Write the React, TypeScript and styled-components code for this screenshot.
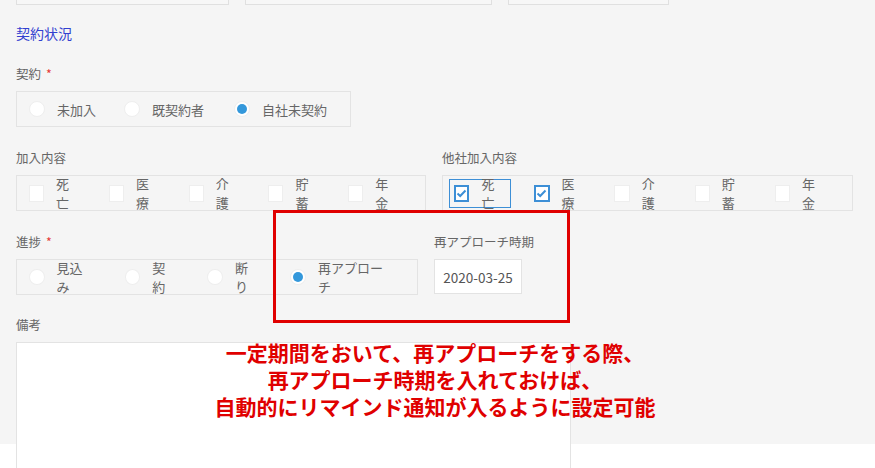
import React from "react";
import styled, { createGlobalStyle } from "styled-components";

const Global = createGlobalStyle`
  html, body { margin: 0; padding: 0; background: #fff; }
  body { font-family: "Noto Sans CJK JP", "Noto Sans", sans-serif; }
`;

const Page = styled.div`
  position: relative;
  width: 875px;
  height: 468px;
  overflow: hidden;
  background: #fff;
`;
const Gray = styled.div`
  height: 444px;
  background: #f5f5f5;
  padding: 0 16px;
  box-sizing: border-box;
  display: flex;
  flex-direction: column;
`;
const TopRow = styled.div`
  display: flex;
  gap: 16px;
  margin-top: -30px;
  height: 35px;
`;
const TopBox = styled.div<{ w: number }>`
  width: ${(p) => p.w}px;
  height: 35px;
  box-sizing: border-box;
  border: 1px solid #e0e0e0;
  background: #f7f7f7;
`;
const Section = styled.div`
  color: #3240d0;
  font-size: 14px;
  margin-top: 18px;
  line-height: 20px;
`;
const Row = styled.div`
  display: flex;
  gap: 16px;
`;
const Field = styled.div<{ mt: number }>`
  display: flex;
  flex-direction: column;
  margin-top: ${(p) => p.mt}px;
`;
const Label = styled.div`
  color: #666;
  font-size: 12.5px;
  line-height: 18px;
  height: 18px;
  margin-bottom: 8px;
`;
const Req = styled.span`
  color: #e53935;
  margin-left: 5px;
`;
const Group = styled.div<{ w: number }>`
  width: ${(p) => p.w}px;
  height: 36px;
  box-sizing: border-box;
  border: 1px solid #e3e3e3;
  display: flex;
  align-items: center;
  padding-left: 9px;
`;
const Item = styled.div<{ focus?: boolean; sp: number }>`
  display: flex;
  align-items: center;
  height: 27px;
  padding: 0 6px 0 ${(p) => (p.focus ? 4 : 2)}px;
  margin-right: ${(p) => p.sp}px;
  margin-left: ${(p) => (p.focus ? -3 : 0)}px;
  border: 1px solid ${(p) => (p.focus ? "#3d8fd6" : "transparent")};
  color: #666;
  font-size: 13px;
  gap: 12px;
`;
const Radio = styled.span<{ on?: boolean }>`
  width: 16px;
  height: 16px;
  border-radius: 50%;
  background: #fff;
  border: 1px solid #eee;
  box-sizing: border-box;
  display: flex;
  align-items: center;
  justify-content: center;
  &::after {
    content: "";
    width: 10px;
    height: 10px;
    border-radius: 50%;
    background: ${(p) => (p.on ? "#3498db" : "transparent")};
  }
`;
const Check = styled.span<{ on?: boolean }>`
  width: 17px;
  height: 17px;
  background: #fff;
  box-sizing: border-box;
  border: ${(p) => (p.on ? "2px solid #3d8fd6" : "1px solid #eee")};
  display: flex;
  align-items: center;
  justify-content: center;
`;
const DateBox = styled.div`
  width: 88px;
  height: 35px;
  box-sizing: border-box;
  border: 1px solid #e3e3e3;
  background: #fff;
  color: #555;
  font-size: 13.5px;
  display: flex;
  align-items: center;
  justify-content: center;
`;
const TextArea = styled.div`
  width: 555px;
  height: 140px;
  box-sizing: border-box;
  border: 1px solid #e3e3e3;
  background: #fff;
`;
const RedBox = styled.div`
  position: absolute;
  left: 273px;
  top: 210px;
  width: 297px;
  height: 113px;
  box-sizing: border-box;
  border: 3px solid #e00000;
`;
const Note = styled.div`
  position: absolute;
  left: 150px;
  width: 570px;
  top: 339px;
  text-align: center;
  color: #e00000;
  font-weight: bold;
  font-size: 21px;
  line-height: 27px;
  font-family: "Noto Sans CJK JP", sans-serif;
`;

const Tick = () => (
  <svg width="11" height="9" viewBox="0 0 11 9">
    <path d="M1.5 4.5 L4.2 7 L9.5 1.5" fill="none" stroke="#3d8fd6" strokeWidth="2" />
  </svg>
);

const kinds = ["死亡", "医療", "介護", "貯蓄", "年金"];

export default function App() {
  return (
    <Page>
      <Global />
      <Gray>
        <TopRow>
          <TopBox w={213} />
          <TopBox w={247} />
          <TopBox w={161} />
        </TopRow>
        <Section>契約状況</Section>
        <Field mt={22}>
          <Label>契約<Req>*</Req></Label>
          <Group w={335}>
            <Item sp={18}><Radio />未加入</Item>
            <Item sp={20}><Radio />既契約者</Item>
            <Item sp={16}><Radio on />自社未契約</Item>
          </Group>
        </Field>
        <Row>
          <Field mt={22}>
            <Label>加入内容</Label>
            <Group w={410}>
              {kinds.map((k) => (
                <Item sp={20} key={k}><Check />{k}</Item>
              ))}
            </Group>
          </Field>
          <Field mt={22}>
            <Label>他社加入内容</Label>
            <Group w={411}>
              {kinds.map((k, i) => (
                <Item sp={20} key={k} focus={i === 0}>
                  <Check on={i < 2}>{i < 2 && <Tick />}</Check>{k}
                </Item>
              ))}
            </Group>
          </Field>
        </Row>
        <Row>
          <Field mt={22}>
            <Label>進捗<Req>*</Req></Label>
            <Group w={402}>
              <Item sp={20}><Radio />見込み</Item>
              <Item sp={20}><Radio />契約</Item>
              <Item sp={20}><Radio />断り</Item>
              <Item sp={16}><Radio on />再アプローチ</Item>
            </Group>
          </Field>
          <Field mt={22}>
            <Label>再アプローチ時期</Label>
            <DateBox>2020-03-25</DateBox>
          </Field>
        </Row>
        <Field mt={21}>
          <Label>備考</Label>
          <TextArea />
        </Field>
      </Gray>
      <RedBox />
      <Note>
        一定期間をおいて、再アプローチをする際、<br />
        再アプローチ時期を入れておけば、<br />
        自動的にリマインド通知が入るように設定可能
      </Note>
    </Page>
  );
}
